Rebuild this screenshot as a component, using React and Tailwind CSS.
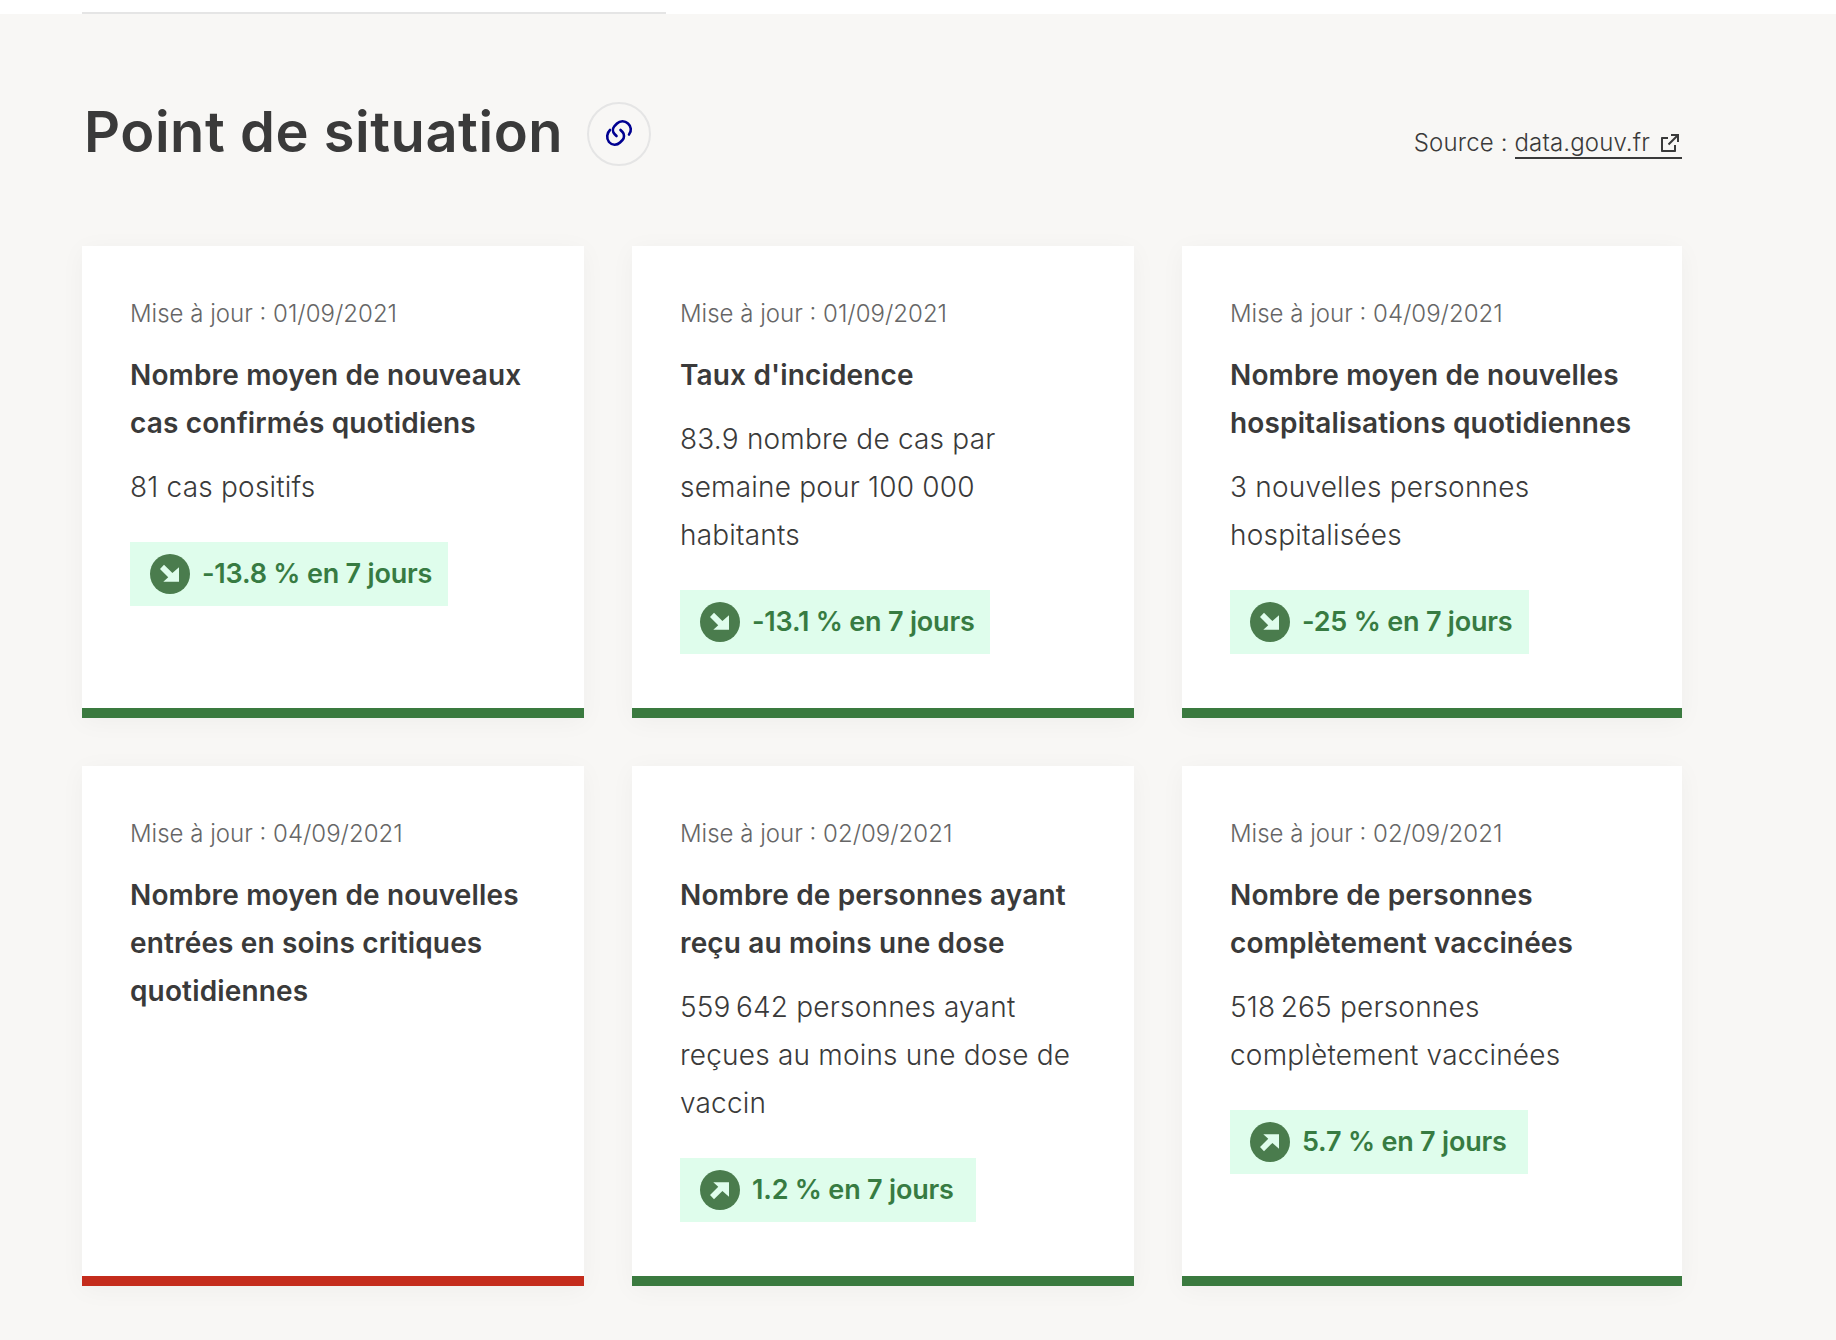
import React from 'react';
import { RiExternalLinkLine } from 'react-icons/ri';

const cards = [
  { date: '01/09/2021', title: ['Nombre moyen de nouveaux', 'cas confirmés quotidiens'], body: ['81 cas positifs'], badge: '-13.8 % en 7 jours', down: true, w: 'w-[318px]' },
  { date: '01/09/2021', title: ["Taux d'incidence"], body: ['83.9 nombre de cas par', 'semaine pour 100 000', 'habitants'], badge: '-13.1 % en 7 jours', down: true, w: 'w-[310px]' },
  { date: '04/09/2021', title: ['Nombre moyen de nouvelles', 'hospitalisations quotidiennes'], body: ['3 nouvelles personnes', 'hospitalisées'], badge: '-25 % en 7 jours', down: true, w: 'w-[299px]' },
  { date: '04/09/2021', title: ['Nombre moyen de nouvelles', 'entrées en soins critiques', 'quotidiennes'], body: [], red: true },
  { date: '02/09/2021', title: ['Nombre de personnes ayant', 'reçu au moins une dose'], body: ['559\u202f642 personnes ayant', 'reçues au moins une dose de', 'vaccin'], badge: '1.2 % en 7 jours', w: 'w-[296px]' },
  { date: '02/09/2021', title: ['Nombre de personnes', 'complètement vaccinées'], body: ['518\u202f265 personnes', 'complètement vaccinées'], badge: '5.7 % en 7 jours', w: 'w-[298px]' },
];

function TrendIcon({ down }) {
  return (
    <svg viewBox="0 0 40 40" className="w-10 h-10 shrink-0">
      <circle cx="20" cy="20" r="20" fill="#4a7c4d" />
      {down ? (
        <path d="M29 13.300V27.700H13.300L18.250 23.250L10 15L14 10.700L22.400 19.100Z" fill="#dffdec" />
      ) : (
        <path d="M29 26.700V12.300H13.300L18.250 16.750L10 25L14 29.300L22.400 20.900Z" fill="#dffdec" />
      )}
    </svg>
  );
}

function ChainIcon() {
  return (
    <svg viewBox="0 0 60 60" className="w-[60px] h-[60px]" fill="none" stroke="#000091" strokeWidth="2.6" strokeLinecap="round">
      <path d="M40 30.500C43 27 42 22 39 19.500C36 16.500 31 16.500 28 19.500L25.500 22C23.500 24.500 23.500 28 25.500 30L27.500 32" />
      <path d="M21 26C18 29 17 34 20 38C23 41.500 28 41.500 31 38.500L33.500 36C35.500 34 35.500 30 33.500 28L31.500 26" />
    </svg>
  );
}

function Card({ card }) {
  return (
    <div className={`bg-white flex flex-col items-start pt-12 px-12 pb-[54px] border-b-[10px] shadow-[0_4px_24px_rgba(0,0,0,0.04)] ${card.red ? 'border-[#c42c1c]' : 'border-[#3a7a3f]'}`}>
      <p className="text-[24px] leading-[40px] text-[#666666] font-light">Mise à jour : {card.date}</p>
      <h3 className="mt-[17px] text-[28px] leading-[48px] font-semibold tracking-[0.15px] text-[#3a3a3a]">
        {card.title.map((t) => <span key={t} className="block whitespace-nowrap">{t}</span>)}
      </h3>
      {card.body.length > 0 && (
        <p className="mt-4 text-[28px] leading-[48px] font-light tracking-[0.2px] text-[#3a3a3a]">
          {card.body.map((t) => <span key={t} className="block whitespace-nowrap">{t}</span>)}
        </p>
      )}
      {card.badge && (
        <div className={`mt-[31px] h-16 flex items-center gap-3 pl-5 bg-[#dffdec] ${card.w}`}>
          <TrendIcon down={card.down} />
          <span className="text-[27px] font-semibold tracking-[-0.2px] text-[#377b42] whitespace-nowrap">{card.badge}</span>
        </div>
      )}
    </div>
  );
}

export default function App() {
  return (
    <div className="min-h-screen bg-[#f8f7f5] font-['Inter',sans-serif] text-[#3a3a3a]">
      <div className="h-[14px] bg-white pl-[82px] flex items-end">
        <div className="w-[584px] h-[2px] bg-[#e5e5e5]" />
      </div>
      <main className="ml-[82px] w-[1600px] pb-[54px]">
        <header className="pt-[88px] flex items-center justify-between">
          <div className="h-16 flex items-center gap-6">
            <h1 className="pl-[2px] mb-[5px] text-[56px] leading-[64px] font-semibold tracking-[0.55px]">Point de situation</h1>
            <button className="w-16 h-16 rounded-full border-2 border-[#e5e5e5] flex items-center justify-center">
              <ChainIcon />
            </button>
          </div>
          <p className="text-[24px] leading-[32px] font-light tracking-[0.15px] mt-[18px]">
            Source : <a className="border-b-2 border-[#3a3a3a] inline-flex items-center gap-2 leading-[28px]">data.gouv.fr <RiExternalLinkLine className="w-6 h-6" /></a>
          </p>
        </header>
        <div className="mt-[80px] grid grid-cols-[502px_502px_500px] gap-12">
          {cards.map((c, i) => <Card key={i} card={c} />)}
        </div>
      </main>
    </div>
  );
}
